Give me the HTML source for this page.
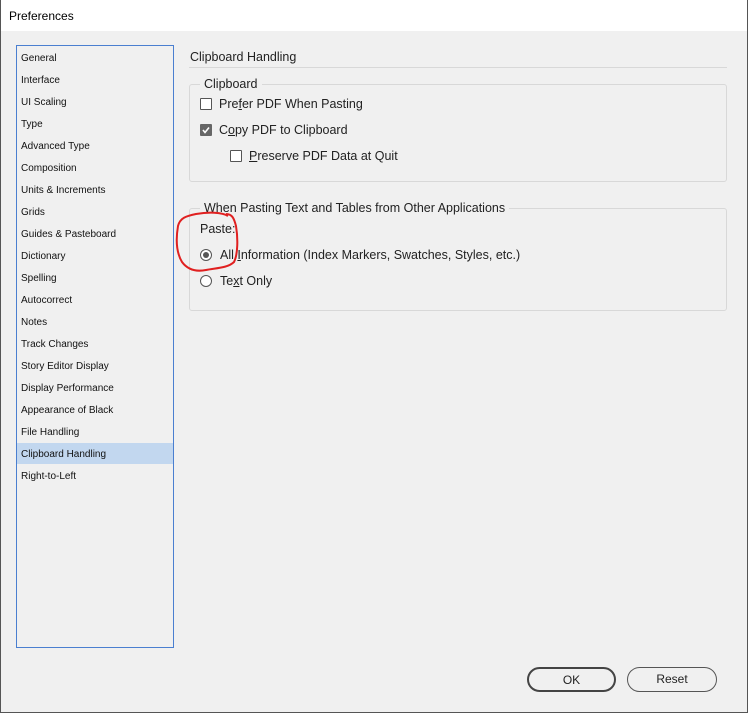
<!DOCTYPE html><html><head><style>
*{margin:0;padding:0;box-sizing:border-box}
body{width:748px;height:713px;background:#f0f0f0;font-family:"Liberation Sans",sans-serif;color:#222;position:relative;overflow:hidden}
.win{position:absolute;left:0;top:0;width:748px;height:713px;border:1px solid #555;border-top:none}
.title{position:absolute;left:0;top:0;width:748px;height:31px;background:#fff;font-size:12px;padding:9px 0 0 9px;color:#000}
.list{position:absolute;left:16px;top:45px;width:158px;height:603px;border:1px solid #4a7fd0;background:#f0f0f0}
.list div{position:absolute;left:0;width:156px;height:21px;font-size:10px;padding:6px 0 0 4px;color:#111}
.list .sel{background:#c2d7ef}
.abs{position:absolute;font-size:12.5px;white-space:nowrap}
.grp{position:absolute;border:1px solid #d8d8d8;border-radius:3px}
.leg{position:absolute;background:#f0f0f0;padding:0 4px;font-size:12.5px}
.cb{position:absolute;width:12px;height:12px;border:1px solid #555;background:#fff;border-radius:1px}
.rb{position:absolute;width:12px;height:12px;border:1px solid #555;border-radius:50%;background:#fff}
.btn{position:absolute;height:25px;border-radius:13px;background:#f0f0f0;font-size:12px;text-align:center;line-height:22px}
u{text-decoration:underline}
</style></head><body>
<div class="title">Preferences</div>
<div class="win"></div>
<div class="list">
<div style="top:1px">General</div><div style="top:23px">Interface</div><div style="top:45px">UI Scaling</div><div style="top:67px">Type</div><div style="top:89px">Advanced Type</div><div style="top:111px">Composition</div><div style="top:133px">Units &amp; Increments</div><div style="top:155px">Grids</div><div style="top:177px">Guides &amp; Pasteboard</div><div style="top:199px">Dictionary</div><div style="top:221px">Spelling</div><div style="top:243px">Autocorrect</div><div style="top:265px">Notes</div><div style="top:287px">Track Changes</div><div style="top:309px">Story Editor Display</div><div style="top:331px">Display Performance</div><div style="top:353px">Appearance of Black</div><div style="top:375px">File Handling</div><div class="sel" style="top:397px">Clipboard Handling</div><div style="top:419px">Right-to-Left</div>
</div>
<div class="abs" style="left:190px;top:50px">Clipboard Handling</div>
<div style="position:absolute;left:189px;top:67px;width:538px;height:1px;background:#d8d8d8"></div>
<div class="grp" style="left:189px;top:84px;width:538px;height:98px"></div>
<div class="leg" style="left:200px;top:77px">Clipboard</div>
<div class="cb" style="left:200px;top:98px"></div><div class="abs" style="left:219px;top:97px">Pre<u>f</u>er PDF When Pasting</div>
<div class="cb" style="left:200px;top:124px;background:#666;border-color:#666"><svg width="10" height="10" style="position:absolute;left:0;top:0"><path d="M2 5l2 2.5 4-5" stroke="#fff" stroke-width="1.6" fill="none"/></svg></div><div class="abs" style="left:219px;top:123px">C<u>o</u>py PDF to Clipboard</div>
<div class="cb" style="left:230px;top:150px"></div><div class="abs" style="left:249px;top:149px"><u>P</u>reserve PDF Data at Quit</div>
<div class="grp" style="left:189px;top:208px;width:538px;height:103px"></div>
<div class="leg" style="left:200px;top:201px">When Pasting Text and Tables from Other Applications</div>
<div class="abs" style="left:200px;top:222px">Paste:</div>
<div class="rb" style="left:200px;top:249px"><div style="position:absolute;left:2px;top:2px;width:6px;height:6px;border-radius:50%;background:#555"></div></div><div class="abs" style="left:220px;top:248px">All <u>I</u>nformation (Index Markers, Swatches, Styles, etc.)</div>
<div class="rb" style="left:200px;top:275px"></div><div class="abs" style="left:220px;top:274px">Te<u>x</u>t Only</div>
<svg style="position:absolute;left:0;top:0" width="300" height="300"><path d="M228 216C222 212 208 212 196 214 186 216 180 218 178 226 176 238 176 252 182 262 188 270 196 272 206 270 216 268 228 268 234 262 238 254 238 238 236 226 234 218 232 214 226 214" stroke="#e02020" stroke-width="2" fill="none"/></svg>
<div class="btn" style="left:527px;top:667px;width:89px;border:2px solid #444">OK</div>
<div class="btn" style="left:627px;top:667px;width:90px;border:1px solid #555;line-height:23px">Reset</div>
</body></html>
